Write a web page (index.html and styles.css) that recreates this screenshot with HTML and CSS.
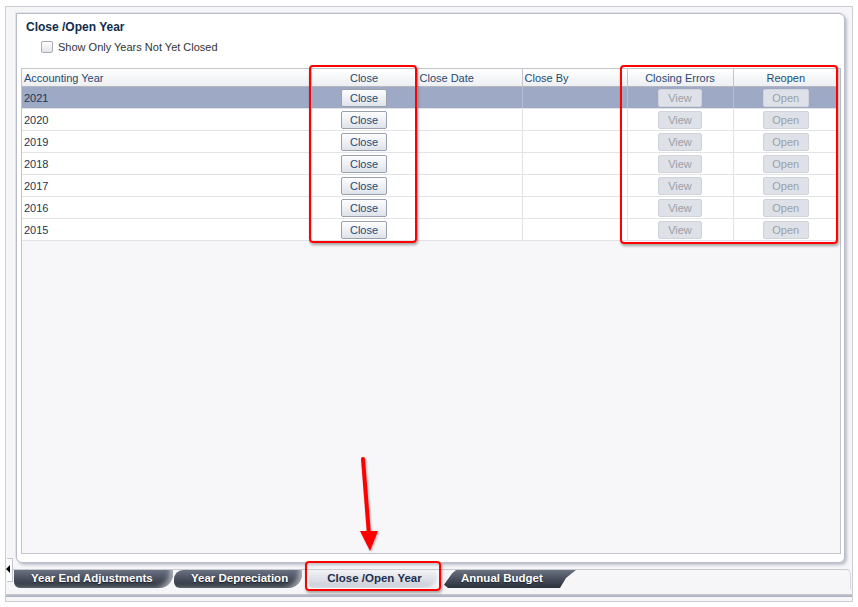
FILE: index.html
```html
<!DOCTYPE html>
<html lang="en">
<head>
  <meta charset="UTF-8">
  <title>Close /Open Year</title>
  <link rel="stylesheet" href="styles.css">
</head>
<body>
  <div class="window">
    <div class="panel">
      <div class="panel-title">Close /Open Year</div>
      <label class="filter">
        <span class="checkbox"></span>
        <span>Show Only Years Not Yet Closed</span>
      </label>
      <div class="table-wrap">
        <table class="years">
          <colgroup>
            <col style="width:289px">
            <col style="width:106px">
            <col style="width:105px">
            <col style="width:105px">
            <col style="width:106px">
            <col style="width:105px">
          </colgroup>
          <thead>
            <tr>
              <th>Accounting Year</th>
              <th class="center">Close</th>
              <th>Close Date</th>
              <th>Close By</th>
              <th class="center">Closing Errors</th>
              <th class="center">Reopen</th>
            </tr>
          </thead>
          <tbody id="year-rows">
            <!-- rows filled by script -->
          </tbody>
        </table>
      </div>
    </div>

    <div class="tabbar">
      <div class="scroll-left"></div>
      <div class="tab tab-first">Year End Adjustments</div>
      <div class="tab tab-second">Year Depreciation</div>
      <div class="tab tab-active">Close /Open Year</div>
      <div class="tab tab-last">Annual Budget</div>
    </div>
    <div class="bottom-band"></div>
  </div>

  <!-- callouts drawn over the screenshot -->
  <div class="callout callout-close"></div>
  <div class="callout callout-reopen"></div>
  <div class="callout callout-tab"></div>
  <svg class="callout-arrow" width="40" height="110" viewBox="0 0 40 110">
    <line x1="12" y1="4" x2="18" y2="80" stroke="#f00" stroke-width="4" stroke-linecap="round"/>
    <polygon points="9,76 27,76 19,96" fill="#f00"/>
  </svg>

  <script>
    const years = [2021, 2020, 2019, 2018, 2017, 2016, 2015];
    const rows = document.getElementById('year-rows');

    years.forEach((year, i) => {
      const tr = document.createElement('tr');
      if (i === 0) tr.className = 'selected';
      tr.innerHTML = `
        <td>${year}</td>
        <td class="center"><button class="btn">Close</button></td>
        <td></td>
        <td></td>
        <td class="center"><button class="btn btn-view" disabled>View</button></td>
        <td class="center"><button class="btn btn-open" disabled>Open</button></td>
      `;
      rows.appendChild(tr);
    });
  </script>
</body>
</html>
```

FILE: styles.css
```css
body {
  margin: 0;
  background-color: #fff;
  font-family: "Liberation Sans", Arial, sans-serif;
  font-size: 11px;
  color: #24364f;
}
.window {
  margin: 6px 5px 0 5px;
  height: 594px;
  border: 1px solid #cdced3;
  background-color: #f6f6f8;
  display: flex;
  flex-direction: column;
}
.panel {
  margin: 6px 7px 0 10px;
  flex: 1;
  background-color: #fff;
  border: 1px solid #b9bdc9;
  border-radius: 0 6px 6px 6px;
  box-shadow: 2px 2px 3px rgba(120, 126, 145, 0.45), -1px -1px 0 #e3e5ea;
  padding: 0 3px 8px 4px;
  display: flex;
  flex-direction: column;
}
.panel-title {
  height: 21px;
  line-height: 16px;
  padding: 5px 0 0 5px;
  box-sizing: border-box;
  font-size: 12px;
  font-weight: bold;
  color: #0f2c4c;
}
.filter {
  display: flex;
  align-items: center;
  height: 20px;
  margin-top: 2px;
  padding-left: 20px;
  color: #333;
}
.checkbox {
  width: 10px;
  height: 10px;
  border: 1px solid #a9acb3;
  border-radius: 2px;
  background: linear-gradient(#fff, #e2e4e9);
  margin-right: 5px;
}
.table-wrap {
  margin-top: 11px;
  flex: 1;
  border: 1px solid #c2c4c9;
  background-color: #f7f7f9;
}
table.years {
  table-layout: fixed;
  border-collapse: collapse;
  width: 816px;
}
.years th {
  height: 17px;
  padding: 0 2px;
  text-align: left;
  font-weight: normal;
  color: #1f4a72;
  background: linear-gradient(#fff, #eceef2);
  border-bottom: 1px solid #b4b7be;
  border-left: 1px solid #c3c6cc;
  white-space: nowrap;
}
.years th:first-child {
  border-left: none;
}
.years td {
  height: 21px;
  padding: 0 2px;
  background-color: #fff;
  border-bottom: 1px solid #e2e3e6;
  border-left: 1px solid #e2e3e6;
}
.years td:first-child {
  border-left: none;
}
.years tr.selected td {
  background-color: #9ea9c5;
  border-left-color: #b4bdd3;
}
.years .center {
  text-align: center;
}
.btn {
  width: 46px;
  height: 18px;
  padding: 0;
  font-family: inherit;
  font-size: 11px;
  color: #1a4c78;
  background: linear-gradient(#fdfdfe, #dfe3ea);
  border: 1px solid #9ba1ac;
  border-radius: 2px;
  vertical-align: middle;
}
.btn:disabled {
  color: #9b9fa7;
  background: #dee1e8;
  border-color: #d0d3da;
}
.btn-view {
  width: 44px;
}
.tabbar {
  margin-top: 6px;
  height: 19px;
  border-top: 1px solid #c8cacf;
  border-top-right-radius: 5px;
  border-right: 1px solid #d6d8dc;
  margin-right: 1px;
  display: flex;
  align-items: flex-start;
}
.scroll-left {
  width: 5px;
  height: 22px;
  margin: -12px 0 0 1px;
  background: #fff;
  border: 1px solid #c5c7cc;
  border-left: none;
  position: relative;
}
.scroll-left::after {
  content: "";
  position: absolute;
  left: -1px;
  top: 6px;
  border-right: 4px solid #000;
  border-top: 4px solid transparent;
  border-bottom: 4px solid transparent;
}
.tab {
  height: 18px;
  line-height: 16px;
  font-size: 11.5px;
  font-weight: bold;
  color: #fff;
  text-shadow: 0 1px 1px #1b1f28;
  background: linear-gradient(#6a7181, #454b59 55%, #2d323d);
  box-sizing: border-box;
  white-space: nowrap;
}
.tab-first {
  width: 159px;
  margin-left: 1px;
  padding-left: 17px;
  border-radius: 0 0 14px 6px;
  box-shadow: inset -6px -3px 5px -3px rgba(255, 255, 255, 0.5);
}
.tab-second {
  width: 128px;
  margin-left: 1px;
  padding-left: 17px;
  border-radius: 9px 0 14px 6px;
  box-shadow: inset -6px -3px 5px -3px rgba(255, 255, 255, 0.5);
}
.tab-active {
  width: 131px;
  margin-left: 7px;
  text-align: center;
  color: #1c2f4d;
  text-shadow: none;
  background: linear-gradient(#f4f4f7, #dadde5 60%, #c3c7d1);
  border-radius: 0 0 10px 4px;
  box-shadow: inset -5px -3px 4px -3px rgba(255, 255, 255, 0.9);
}
.tab-last {
  width: 132px;
  margin-left: 4px;
  padding-left: 17px;
  clip-path: polygon(12px 0, 100% 0, calc(100% - 10px) 8px, calc(100% - 16px) 100%, 4px 100%, 0 82%, 8px 20%);
}
.bottom-band {
  margin-top: 5px;
  height: 3px;
  background: linear-gradient(#c9ccd6, #a9adbb);
  margin-bottom: 4px;
}
.callout {
  position: absolute;
  border: 2px solid #f00;
  border-radius: 4px;
  box-shadow: 1px 2px 3px rgba(0, 0, 0, 0.35);
  box-sizing: border-box;
}
.callout-close {
  left: 309px;
  top: 65px;
  width: 108px;
  height: 178px;
}
.callout-reopen {
  left: 620px;
  top: 65px;
  width: 218px;
  height: 179px;
}
.callout-tab {
  left: 305px;
  top: 561px;
  width: 136px;
  height: 30px;
}
.callout-arrow {
  position: absolute;
  left: 351px;
  top: 455px;
  filter: drop-shadow(1px 1px 1px rgba(0, 0, 0, 0.3));
}
```
